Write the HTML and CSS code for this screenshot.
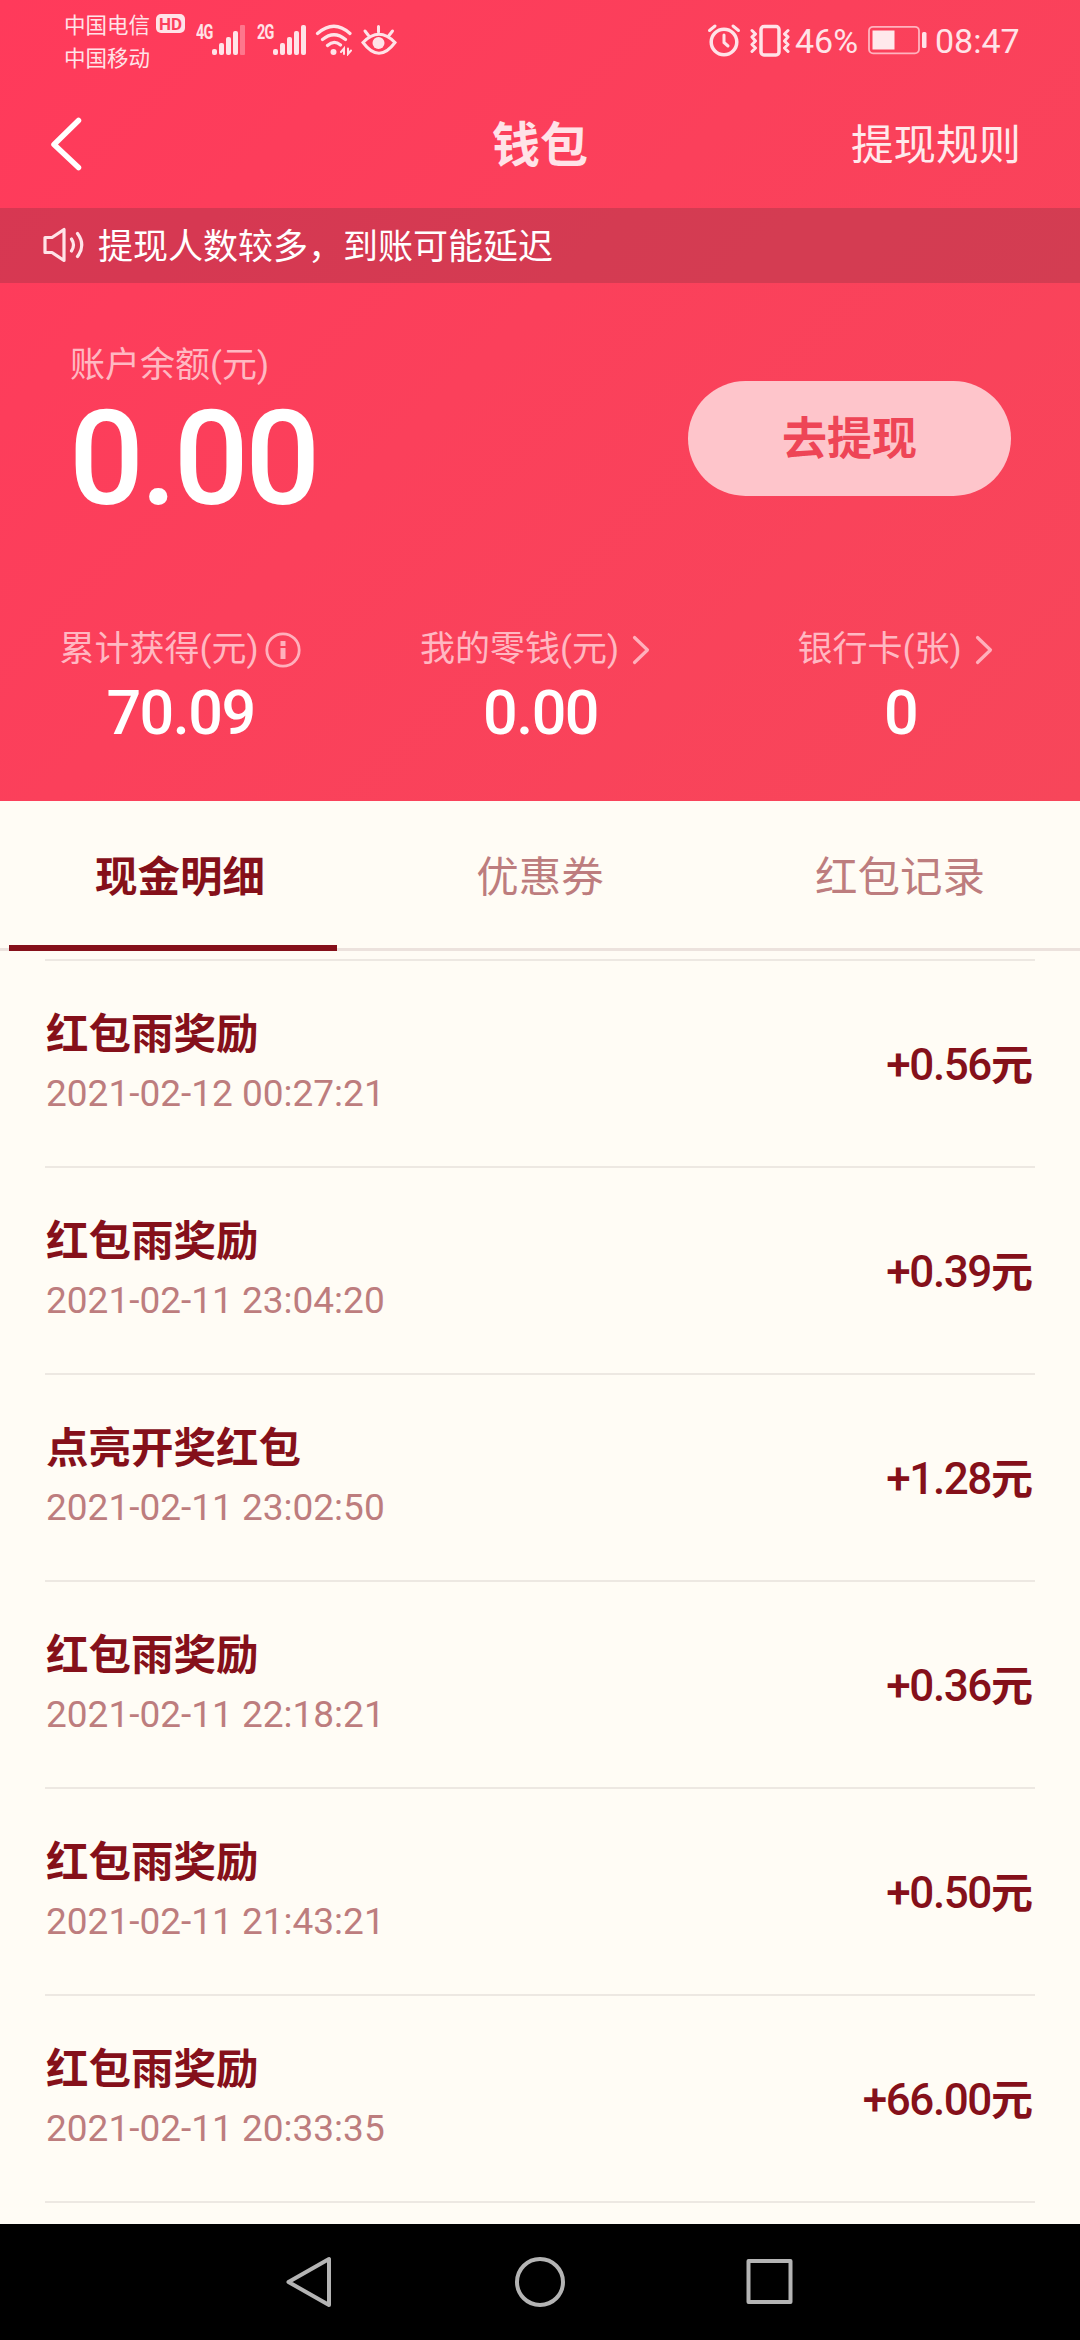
FILE: index.html
```html
<!DOCTYPE html>
<html lang="zh-CN">
<head>
<meta charset="utf-8">
<title>钱包</title>
<link rel="stylesheet" href="styles.css">
</head>
<body>
<div class="screen">
  <header class="hero">
    <div class="status">
      <div class="carriers">
        <div class="carrier">中国电信<span class="hd">HD</span></div>
        <div class="carrier">中国移动</div>
      </div>
      <span class="net">4G</span>
      <svg class="bars" width="34" height="32" viewBox="0 0 34 32" fill="#ffe3e8"><rect x="0" y="25" width="5" height="6" rx="2"/><rect x="7" y="19" width="5" height="12" rx="2"/><rect x="14" y="13" width="5" height="18" rx="2"/><rect x="21" y="7" width="5" height="24" rx="2"/><rect x="28" y="1" width="5" height="30" rx="1" opacity=".35"/></svg>
      <span class="net net2">2G</span>
      <svg class="bars" width="34" height="32" viewBox="0 0 34 32" fill="#ffe3e8"><rect x="0" y="25" width="5" height="6" rx="2"/><rect x="7" y="19" width="5" height="12" rx="2"/><rect x="14" y="13" width="5" height="18" rx="2"/><rect x="21" y="7" width="5" height="24" rx="2"/><rect x="28" y="1" width="5" height="30" rx="2"/></svg>
      <svg class="wifi" width="38" height="32" viewBox="0 0 38 32" fill="none" stroke="#ffe3e8" stroke-width="3.2" stroke-linecap="round"><path d="M2.5 9.5Q19-5 35 9.5M7.5 15.5Q19 6 30.500 15.500M12.500 21.500Q19 15.500 25.500 21"/><circle cx="18.500" cy="28" r="3" fill="#ffe3e8" stroke="none"/><path d="M29 30V24.500L26 28M33 24.500V30L36 26.500" stroke-width="2"/></svg>
      <svg class="eye" width="36" height="32" viewBox="0 0 36 32" fill="none" stroke="#ffe3e8" stroke-width="3" stroke-linecap="round"><path d="M2 18.500Q18 2 34 18.500Q18 40 2 18.500ZM17.500 8V2.500M7.500 11.500L4 7M28 11.500L31.500 7"/><circle cx="17.500" cy="19" r="6" fill="#ffe3e8" stroke="none"/></svg>
      <svg class="alarm" width="34" height="34" viewBox="0 0 34 34" fill="none" stroke="#ffe3e8" stroke-width="3.500" stroke-linecap="round"><circle cx="17" cy="19" r="12.800"/><path d="M17 12V19.500L21 23M2.500 7.500L8 3M31.500 7.500L26 3" stroke-width="3"/></svg>
      <svg class="vibrate" width="42" height="34" viewBox="0 0 42 34" fill="none" stroke="#ffe3e8" stroke-width="3" stroke-linejoin="round" stroke-linecap="round"><rect x="12" y="2.500" width="18" height="28.500" rx="3" stroke-width="3.500"/><path d="M3 6.500L6.500 10L3 13L6.500 17L3 20.500L6.500 24L3 27.500M39 6.500L35.500 10L39 13L35.500 17L39 20.500L35.500 24L39 27.500"/></svg>
      <span class="pct">46%</span>
      <svg class="battery" width="60" height="30" viewBox="0 0 60 30"><rect x="1" y="1.800" width="50" height="26.500" rx="4" fill="none" stroke="#ffb3bf" stroke-width="1.800"/><rect x="4.500" y="5.500" width="22" height="19" fill="#ffe9ec"/><rect x="54" y="7" width="4.500" height="16" rx="1.500" fill="#ffe3e8"/></svg>
      <span class="time">08:47</span>
    </div>
    <nav class="nav">
      <svg class="back" width="34" height="56" viewBox="0 0 34 56" fill="none" stroke="#fff" stroke-width="5.500" stroke-linecap="round" stroke-linejoin="round"><path d="M29.500 4.500L5 28.500L29.500 51.500"/></svg>
      <h1 class="title">钱包</h1>
      <a class="rules">提现规则</a>
    </nav>
    <div class="notice">
      <svg width="44" height="36" viewBox="0 0 44 36" fill="none" stroke="#ffe3e8" stroke-width="3.200" stroke-linecap="round" stroke-linejoin="round"><path d="M3 10.500H10L22 2.500V33.500L10 25.500H3ZM29.500 12Q33.500 18 29.500 24M35.500 6.500Q44 18 35.500 29.500"/></svg>
      <span>提现人数较多，到账可能延迟</span>
    </div>
    <section class="balance">
      <div class="balance-info">
        <div class="label">账户余额(元)</div>
        <div class="big">0.00</div>
      </div>
      <button class="withdraw">去提现</button>
    </section>
    <section class="stats">
      <div class="stat"><div class="label">累计获得(元)<svg class="info" width="38" height="38" viewBox="0 0 38 38" fill="none" stroke="#ffb0bc" stroke-width="2.800"><circle cx="19" cy="19" r="16.200"/><path d="M19 10V15M19 17V28" stroke-width="5"/></svg></div><div class="value">70.09</div></div>
      <div class="stat"><div class="label">我的零钱(元)<svg class="more" width="42" height="32" viewBox="0 0 42 32" fill="none" stroke="#ffb0bc" stroke-width="3.200" stroke-linecap="round" stroke-linejoin="round"><path d="M15.500 3.500L28.500 16L15.500 28.500"/></svg></div><div class="value">0.00</div></div>
      <div class="stat"><div class="label">银行卡(张)<svg class="more" width="42" height="32" viewBox="0 0 42 32" fill="none" stroke="#ffb0bc" stroke-width="3.200" stroke-linecap="round" stroke-linejoin="round"><path d="M15.500 3.500L28.500 16L15.500 28.500"/></svg></div><div class="value">0</div></div>
    </section>
  </header>
  <div class="tabs">
    <div class="tab active">现金明细</div>
    <div class="tab">优惠券</div>
    <div class="tab">红包记录</div>
  </div>
  <main class="list">
    <div class="row"><div><div class="name">红包雨奖励</div><div class="date">2021-02-12 00:27:21</div></div><div class="amount">+0.56<span class="unit">元</span></div></div>
    <div class="row"><div><div class="name">红包雨奖励</div><div class="date">2021-02-11 23:04:20</div></div><div class="amount">+0.39<span class="unit">元</span></div></div>
    <div class="row"><div><div class="name">点亮开奖红包</div><div class="date">2021-02-11 23:02:50</div></div><div class="amount">+1.28<span class="unit">元</span></div></div>
    <div class="row"><div><div class="name">红包雨奖励</div><div class="date">2021-02-11 22:18:21</div></div><div class="amount">+0.36<span class="unit">元</span></div></div>
    <div class="row"><div><div class="name">红包雨奖励</div><div class="date">2021-02-11 21:43:21</div></div><div class="amount">+0.50<span class="unit">元</span></div></div>
    <div class="row"><div><div class="name">红包雨奖励</div><div class="date">2021-02-11 20:33:35</div></div><div class="amount">+66.00<span class="unit">元</span></div></div>
  </main>
  <footer class="sysbar">
    <svg width="54" height="54" viewBox="0 0 54 54" fill="none" stroke="#b4b4b4" stroke-width="4" stroke-linejoin="round"><path d="M45 4V50L4.500 27Z"/></svg>
    <svg width="54" height="54" viewBox="0 0 54 54" fill="none" stroke="#b4b4b4" stroke-width="4"><circle cx="27" cy="27" r="23"/></svg>
    <svg width="54" height="54" viewBox="0 0 54 54" fill="none" stroke="#b4b4b4" stroke-width="4" stroke-linejoin="round"><rect x="6.500" y="6" width="42" height="41"/></svg>
  </footer>
</div>
</body>
</html>
```
FILE: styles.css
```css
* { box-sizing: border-box; }
body { margin: 0; font-family: Roboto, "Noto Sans CJK SC", sans-serif; }
svg { display: block; flex: none; }
.screen { width: 1080px; height: 2340px; display: flex; flex-direction: column; background: #fffcf5; overflow: hidden; }
.hero { height: 801px; background: linear-gradient(135deg, #ff3a5b 0%, #fb405b 45%, #f7465a 100%); color: #fff; }

.status { height: 80px; display: flex; align-items: flex-start; padding: 7px 0 0 64px; color: #ffe3e8; }
.carriers { width: 132px; font-family: "Noto Sans CJK SC", sans-serif; font-size: 21.500px; }
.carrier { height: 33px; line-height: 33px; display: flex; align-items: center; }
.hd { width: 29px; height: 19px; margin-left: 6px; border-radius: 5px; background: #ffe3e8; color: #fc3f5b; font: 700 17px/20px Roboto, sans-serif; text-align: center; }
.net { width: 16px; margin-top: 15px; font: 700 20px/20px Roboto, sans-serif; letter-spacing: -1px; transform: scaleX(.72); transform-origin: left; }
.net2 { margin-left: 11px; }
.bars { margin-top: 17px; }
.wifi { margin: 17px 0 0 8px; }
.eye { margin: 17px 0 0 8px; }
.alarm { margin: 16px 0 0 310px; }
.vibrate { margin: 17px 0 0 8px; }
.pct { margin: 14px 0 0 4px; width: 71px; font-size: 34px; line-height: 40px; white-space: nowrap; }
.battery { margin: 18px 0 0 2px; }
.time { margin: 14px 0 0 7px; font-size: 34px; line-height: 40px; }

.nav { height: 128px; display: grid; grid-template-columns: 1fr auto 1fr; align-items: center; padding: 0 60px 0 49px; font-family: "Noto Sans CJK SC", sans-serif; }
.title { margin: 0 0 6px 11px; font-size: 48px; font-weight: 700; line-height: 64px; color: #ffe3e8; }
.rules { justify-self: end; margin: 0 -1px 5px 0; font-size: 42.500px; color: #ffe9ec; }
.notice { height: 75px; display: flex; align-items: center; gap: 12px; padding: 0 0 1px 42px; background: rgba(60, 40, 50, .2); font: 35px/50px "Noto Sans CJK SC", sans-serif; }
.notice span { padding-bottom: 3px; }

.label { display: flex; align-items: center; font-size: 35px; line-height: 42px; height: 42px; color: #ffb8c2; }
.balance { height: 341px; display: flex; justify-content: space-between; align-items: flex-start; padding: 62px 69px 0 70px; }
.big { margin: 17px 0 0 -1px; font-size: 132px; line-height: 110px; font-weight: 500; letter-spacing: -3.500px; }
.withdraw { width: 323px; height: 115px; margin-top: 36px; padding: 0 0 5px; border: 0; border-radius: 58px; background: #fec5cb; color: #ee4556; font: 700 45px/60px "Noto Sans CJK SC", sans-serif; }
.stats { display: grid; grid-template-columns: repeat(3, 1fr); }
.stat { display: flex; flex-direction: column; align-items: center; padding: 5px 0 0 1px; }
.info { margin-left: 5px; }
.more { margin-left: 0; }
.value { margin-top: 12px; font-size: 61px; line-height: 60px; font-weight: 500; letter-spacing: -1.500px; }

.tabs { height: 150px; display: grid; grid-template-columns: repeat(3, 1fr); border-bottom: 3px solid #ece2dd; font: 42.500px/60px "Noto Sans CJK SC", sans-serif; color: #bd7d7e; text-align: center; }
.tab { height: 150px; margin: 0 23px 0 9px; padding: 43px 0 0 14px; }
.tab.active { color: #85101a; font-weight: 700; border-bottom: 6px solid #85101a; }
.list { flex: 1; margin: 8px 45px 0; border-top: 2px solid #ede8e2; }
.row { height: 207px; display: flex; align-items: center; justify-content: space-between; padding: 0 2px 0 1px; border-bottom: 2px solid #ede8e2; }
.name { font: 700 42.500px/60px "Noto Sans CJK SC", sans-serif; color: #85101a; margin: -2px 0 2px; }
.date { font-size: 37px; line-height: 60px; color: #bd7d7e; padding-top: 1px; }
.amount { padding-bottom: 5px; font-size: 44px; font-weight: 500; letter-spacing: -1.400px; color: #85101a; }
.unit { letter-spacing: 0; font-size: 42px; font-weight: 700; }

.sysbar { height: 116px; background: #000; display: flex; justify-content: center; align-items: center; gap: 175px; }
```
